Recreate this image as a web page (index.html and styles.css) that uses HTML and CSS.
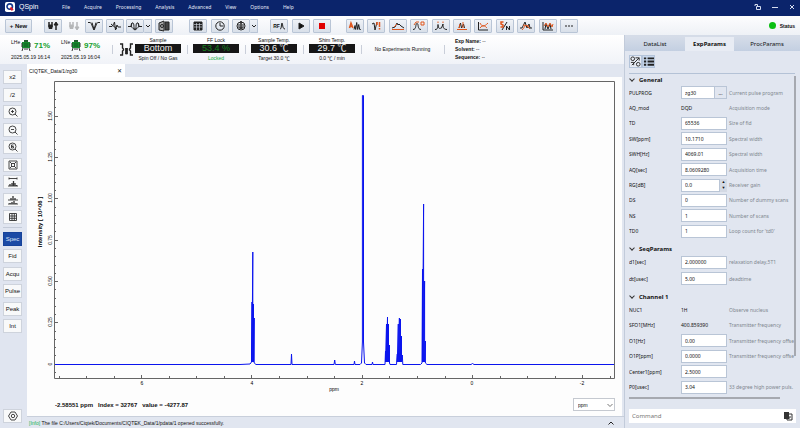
FILE: index.html
```
<!DOCTYPE html>
<html lang="en">
<head>
    <meta charset="UTF-8">
    <meta name="viewport" content="width=device-width, initial-scale=1.0">
    <title>QSpin</title>
    <link rel="stylesheet" href="styles.css">
</head>
<body>
    <header class="titlebar">
        <svg class="logo" viewBox="0 0 11 11"><rect width="11" height="11" rx="2" fill="#fff"/><circle cx="5.2" cy="5" r="3" fill="none" stroke="#17398f" stroke-width="1.8"/><path d="M6 6l2.500 3" stroke="#e0202c" stroke-width="2.6"/></svg>
        <span class="brand">QSpin</span>
        <nav class="menu">
            <a href="#">File</a><a href="#">Acquire</a><a href="#">Processing</a><a href="#">Analysis</a><a href="#">Advanced</a><a href="#">View</a><a href="#">Options</a><a href="#">Help</a>
        </nav>
        <div class="window-buttons">
            <button aria-label="Lock"><svg viewBox="0 0 8 8"><path d="M2.500 3.500h4v3h-4zM1 3V1.500h2.500V3.500"/></svg></button>
            <button aria-label="Minimize"><svg viewBox="0 0 8 8"><path d="M1 4.500h6"/></svg></button>
            <button aria-label="Close"><svg viewBox="0 0 8 8"><path d="M2 2l4 4M6 2l-4 4"/></svg></button>
        </div>
    </header>

    <div class="toolbar">
        <button class="tool new">+ New</button>
        <div class="tools tools-sample">
            <button class="tool" aria-label="Eject"><svg viewBox="0 0 14 12"><path class="thick" d="M3 2v5M6 2v5M10 10V3"/><path d="M3 5h3v3.500H3z" fill="#222"/><path d="M8 5l2-3 2 3z" fill="#222"/></svg></button>
            <button class="tool off" disabled aria-label="Insert"><svg viewBox="0 0 14 12"><path class="thick" d="M3 2v5M6 2v5M10 2v7"/><path d="M3 5h3v3.500H3z" fill="#222"/><path d="M8 7l2 3 2-3z" fill="#222"/></svg></button>
            <button class="tool" aria-label="Tune"><svg viewBox="0 0 14 12"><path d="M1 2.500h2c1.500 0 2 4 4 7.500 2-3.500 2.500-7.500 4-7.500h2M5 2.500l2 7 2-7"/></svg></button>
            <button class="tool" aria-label="Pulse"><svg viewBox="0 0 14 12"><path d="M1 6.500h3l1.500-2L6.500 2l1 8 1.500-5 1 2h3M3 4l6 5"/></svg></button>
            <div class="split">
                <button class="tool" aria-label="Shim"><svg viewBox="0 0 14 12"><path d="M0 6.500h3l1-3.500c2-1 2 2 2 6h2c0-4 0-7 2-6l1 3.500h3M4 3c-2 3 0 5 3 7 3-2 5-4 3-7"/></svg></button>
                <button class="tool arrow" aria-label="Shim menu"><svg viewBox="0 0 6 6"><path d="M1 2l2 2 2-2"/></svg></button>
            </div>
            <button class="tool" aria-label="Cabinet"><svg viewBox="0 0 14 12"><path d="M2 3l5-2v10l-5-1z" fill="#aaa"/><path d="M8 2h4v8H8z" fill="#444"/><circle cx="5" cy="6" r="1.500"/></svg></button>
        </div>
        <div class="tools tools-view">
            <button class="tool" aria-label="Table"><svg viewBox="0 0 14 12"><path d="M3 2h8v8H3z" fill="#222"/><path d="M3 4.500h8M3 7h8M5.500 3v7M8.500 3v7" stroke="#dde3ec" stroke-width=".6"/></svg></button>
            <button class="tool" aria-label="History"><svg viewBox="0 0 14 12"><circle cx="7" cy="6" r="4.200"/><path d="M7 3v3h3"/></svg></button>
            <div class="split">
                <button class="tool" aria-label="Gradient"><svg viewBox="0 0 14 12"><circle cx="7" cy="6" r="4"/><path class="thick" d="M7 1v8"/><path d="M5 4v4M9 4v4M5 8h4"/></svg></button>
                <button class="tool arrow" aria-label="Gradient menu"><svg viewBox="0 0 6 6"><path d="M1 2l2 2 2-2"/></svg></button>
            </div>
        </div>
        <div class="tools tools-run">
            <button class="tool rf">RF<svg viewBox="0 0 5 8"><path d="M0 7c2 0 1-6 2-6s0 6 3 6"/></svg></button>
            <button class="tool" aria-label="Run"><svg viewBox="0 0 14 12"><path d="M5 3l5 3-5 3z" fill="#111"/></svg></button>
            <button class="tool" aria-label="Stop"><svg viewBox="0 0 14 12"><path d="M4 3h6v6H4z" fill="#e00000" stroke="none"/></svg></button>
        </div>
        <div class="tools tools-process">
            <button class="tool" aria-label="Auto"><svg viewBox="0 0 14 12"><path d="M6 9.500l1-4 .7 4 1-7 1 7 1-5 1 5h1"/><path class="hot thick" d="M1.500 8l1.500-5 2 5M2 6.500h2"/></svg></button>
            <button class="tool" aria-label="Fourier"><svg viewBox="0 0 14 12"><path d="M3 4l2-1 1 7 2-8"/><path class="hot thick" d="M8 2v3M10.500 2v5M10.500 8v1.500"/></svg></button>
            <button class="tool" aria-label="Baseline"><svg viewBox="0 0 14 12"><path d="M1 8l3-1 2-4 1 2 1-1 2 2 3 2"/><path class="hot" d="M1 9.500h12M3 7l3-3"/></svg></button>
            <button class="tool" aria-label="Phase"><svg viewBox="0 0 14 12"><path d="M1 9.500c4 0 2-6 4-6s0 6 4 6"/><path class="hot" d="M2 5l2-3h3M9 2h3v3H9z"/></svg></button>
            <button class="tool" aria-label="Peaks"><svg viewBox="0 0 14 12"><path d="M1 9.500c3 0 2.500-2 3-5 .5 5 1.500 4 3.500 3.500L9 4c0 4 1 5.500 4 5.500"/><path class="hot" d="M4 1.500V3M9 1.500V3"/></svg></button>
            <button class="tool" aria-label="Integrate"><svg viewBox="0 0 14 12"><path d="M4 8l1.500-5 1 5 2-4 1 4"/><path class="hot" d="M2 9.500h10M4 8l1-4M8 2v6"/></svg></button>
            <button class="tool" aria-label="Fit"><svg viewBox="0 0 14 12"><path d="M2.500 2v8H12"/><path class="hot" d="M4 3c2 4 4 4 8 0M4 8c3-4 5-2 7 0"/></svg></button>
            <button class="tool" aria-label="Signal to noise"><svg viewBox="0 0 14 12"><path d="M4 10l5-8M8.500 10V6l3 4V6"/><path class="hot thick" d="M5.500 2H3v2l2 1v2H2.500"/></svg></button>
            <button class="tool" aria-label="Smooth"><svg viewBox="0 0 14 12"><path d="M1 8h2l3-6 2 6 2-4 1 4h2"/><path class="hot" d="M3 10l4-5 4 4M4 5l6 1"/></svg></button>
            <button class="tool" aria-label="Stack"><svg viewBox="0 0 14 12"><path d="M2 2v8h10M4 9l1-5 2 5 2-5 1 5"/><path class="hot" d="M3 6l2-3 2 4 2-4 2 4 1-3"/></svg></button>
            <button class="tool" aria-label="More"><svg viewBox="0 0 14 12"><path d="M3 6h2M6 6h2M9 6h2"/></svg></button>
        </div>
        <div class="status"><span class="dot"></span>Status</div>
    </div>

    <main class="main">
        <section class="left">
            <div class="monitor">
                <div class="level">
                    <div class="level-top"><span>LHe</span><svg viewBox="0 0 10 11"><path d="M3 0h4v2h2v6H1V2h2z" fill="#168a2e"/><path d="M3 1h4M1 3v4M9 3v4M2 8l-1 3M8 8l1 3M4 8v2M6 8v2" stroke="#333"/><path d="M3 4h4M3 6h4" stroke="#0d5c1d"/></svg><b>71%</b></div>
                    <div>2025.05.19 16:14</div>
                </div>
                <div class="level">
                    <div class="level-top"><span>LNe</span><svg viewBox="0 0 10 11"><path d="M3 0h4v2h2v6H1V2h2z" fill="#168a2e"/><path d="M3 1h4M1 3v4M9 3v4M2 8l-1 3M8 8l1 3M4 8v2M6 8v2" stroke="#333"/><path d="M3 4h4M3 6h4" stroke="#0d5c1d"/></svg><b>97%</b></div>
                    <div>2025.05.19 16:04</div>
                </div>
                <i class="sep"></i>
                <svg class="magnet" viewBox="0 0 13 13"><path d="M0 1h2.500v4l1 1v1l-1 1v4H0M13 1h-2.500v4l-1 1v1l1 1v4H13" fill="none" stroke="#222" stroke-width="1.400"/><path d="M5.500 5v6h2V5" fill="#222" stroke="#222" stroke-width=".8"/></svg>
                <div class="readout"><span>Sample</span><output class="lcd">Bottom</output><span>Spin Off / No Gas</span></div>
                <i class="sep"></i>
                <div class="readout"><span>FF Lock</span><output class="lcd lock">53.4 %</output><span class="green">Locked</span></div>
                <i class="sep"></i>
                <div class="readout"><span>Sample Temp.</span><output class="lcd">30.6 ℃</output><span>Target 30.0 ℃</span></div>
                <i class="sep"></i>
                <div class="readout"><span>Shim Temp.</span><output class="lcd">29.7 ℃</output><span>0.0 ℃ / min</span></div>
                <i class="sep"></i>
                <div class="running">No Experiments Running</div>
                <i class="sep"></i>
                <div class="experiment"><div><b>Exp Name:</b> --</div><div><b>Solvent:</b> --</div><div><b>Sequence:</b> --</div></div>
            </div>

            <div class="workspace">
                <aside class="sidebar">
                    <div class="side-group zooms">
                        <button class="side">x2</button>
                        <button class="side">/2</button>
                        <button class="side" aria-label="Zoom in"><svg viewBox="0 0 10 10"><circle cx="4.500" cy="4.500" r="3.500"/><path d="M7 7l2.500 2.500M3 4.500h3M4.500 3v3"/></svg></button>
                        <button class="side" aria-label="Zoom out"><svg viewBox="0 0 10 10"><circle cx="4.500" cy="4.500" r="3.500"/><path d="M7 7l2.500 2.500M3 4.500h3"/></svg></button>
                        <button class="side" aria-label="Reset zoom"><svg viewBox="0 0 10 10"><circle cx="4.500" cy="4.500" r="3.500"/><path d="M7 7l2.500 2.500M5.500 3h-2v3h2V4.500h-2"/></svg></button>
                        <button class="side" aria-label="Fit"><svg viewBox="0 0 10 10"><path d="M1 1h8v8H1zM2 2l2 2M8 2L6 4M2 8l2-2M8 8L6 6M3.500 3.500h3v3h-3z"/></svg></button>
                        <button class="side" aria-label="Full width"><svg viewBox="0 0 10 10"><path d="M1 1.500h8M1 .5v2M9 .5v2M0 9h10"/><path class="thick" d="M2 9V7M4 9V6M5.500 9V4M7 9V6M8.500 9V8"/></svg></button>
                        <button class="side" aria-label="Full height"><svg viewBox="0 0 10 10"><path d="M0 5h10M0 9h10"/><path class="thick" d="M3 5V3M5 5V1M7 5V3M2 9V8M4 9V7M6 9V6M8 9V8"/></svg></button>
                        <button class="side" aria-label="Grid"><svg viewBox="0 0 10 10"><path d="M1.500 1.500h7v7h-7zM1.500 4h7M1.500 6.300h7M4 1.500v7M6.300 1.500v7"/></svg></button>
                    </div>
                    <div class="side-group modes">
                        <button class="side active">Spec</button>
                        <button class="side">Fid</button>
                        <button class="side">Acqu</button>
                        <button class="side">Pulse</button>
                        <button class="side">Peak</button>
                        <button class="side">Int</button>
                    </div>
                    <button class="side settings" aria-label="Settings"><svg viewBox="0 0 10 10"><path d="M3 1h4l2.500 4L7 9H3L.5 5z"/><circle cx="5" cy="5" r="1.700"/></svg></button>
                </aside>

                <div class="document">
                    <div class="doc-tabs"><div class="doc-tab"><span>CIQTEK_Data/1/zg30</span><button aria-label="Close tab">✕</button></div></div>
                    <div class="sheet">
                        <svg class="plot" viewBox="27 77 595 318">
                            <path class="axis" d="M54.500 81.500H614.500V378.500H54.500z"/>
                            <!-- ticks -->
                            <path class="axis" d="M54 116.500h4M54 157.500h4M54 198.500h4M54 240.500h4M54 281.500h4M54 322.500h4M54 364.500h4M54 91.500h2M54 99.500h2M54 107.500h2M54 124.500h2M54 132.500h2M54 141.500h2M54 149.500h2M54 165.500h2M54 174.500h2M54 182.500h2M54 190.500h2M54 207.500h2M54 215.500h2M54 223.500h2M54 231.500h2M54 248.500h2M54 256.500h2M54 265.500h2M54 273.500h2M54 289.500h2M54 298.500h2M54 306.500h2M54 314.500h2M54 331.500h2M54 339.500h2M54 347.500h2M54 355.500h2M54 372.500h2"/>
                            <path class="axis" d="M141.500 378v-3M251.500 378v-3M362.500 378v-3M472.500 378v-3M582.500 378v-3M59.500 378v-2M86.500 378v-2M114.500 378v-2M169.500 378v-2M196.500 378v-2M224.500 378v-2M279.500 378v-2M307.500 378v-2M334.500 378v-2M389.500 378v-2M417.500 378v-2M445.500 378v-2M500.500 378v-2M527.500 378v-2M555.500 378v-2M610.500 378v-2"/>
                            <g class="ticks">
                                <text transform="translate(52 116) rotate(-90)">1.50</text>
                                <text transform="translate(52 157) rotate(-90)">1.25</text>
                                <text transform="translate(52 198) rotate(-90)">1.00</text>
                                <text transform="translate(52 240) rotate(-90)">0.75</text>
                                <text transform="translate(52 281) rotate(-90)">0.50</text>
                                <text transform="translate(52 322) rotate(-90)">0.25</text>
                                <text transform="translate(52 364) rotate(-90)">0</text>
                                <text x="142" y="385">6</text>
                                <text x="252" y="385">4</text>
                                <text x="362" y="385">2</text>
                                <text x="472" y="385">0</text>
                                <text x="582" y="385">-2</text>
                                <text x="334" y="391">ppm</text>
                            </g>
                            <text class="y-title" transform="translate(42 222) rotate(-90)">Intensity [ 10^06 ]</text>
                            <!-- spectrum -->
                            <path class="trace" d="M55 364.500H240L250 364L251.500 362V351L252 302V362L252.800 252V362L253.500 304V362L254.200 318V363L256 364.500H291L291.500 354L292 364.500H334L334.700 360L335.300 364.500H354L354.500 361L355 364.500H360L361.500 363L362.400 342V95.500H363.500V342L364.500 363L366 364.500H372L372.500 362L373 364.500H385L385.500 351V362L386.500 324V362L387.500 317V362L388.500 324V362L389.500 345V363L390 364.500H396.500L397.300 354V362L398.300 324V362L399.400 318V362L400.500 319V362L401.500 336V362L402.300 355L402.800 364.500H420.500L422 363L422.500 269V362L423.600 204V362L424.600 281V362L425.400 341V363L427 364.500H471L472.500 363.500L474 364.500H614"/>
                        </svg>
                        <div class="sheet-foot">
                            <b class="cursor">-2.58551 ppm &nbsp; Index = 32767 &nbsp; value = -4277.87</b>
                            <div class="unit">
                                <select aria-label="Unit"><option>ppm</option><option>Hz</option></select>
                                <svg viewBox="0 0 8 8"><path d="M1.500 3L4 5.500 6.500 3"/></svg>
                            </div>
                        </div>
                    </div>
                    <div class="log"><span><em>[Info]</em> The file C:/Users/Ciqtek/Documents/CIQTEK_Data/1/pdata/1 opened successfully.</span><button aria-label="Expand log"><svg viewBox="0 0 8 8"><path d="M1.500 5.500L4 3l2.500 2.500"/></svg></button></div>
                </div>
            </div>
        </section>

        <aside class="panel">
            <div class="tabs">
                <button>DataList</button>
                <button class="current">ExpParams</button>
                <button>ProcParams</button>
            </div>
            <div class="panel-tools">
                <button aria-label="Pulse view"><svg viewBox="0 0 12 12"><circle cx="3" cy="3" r="2"/><circle cx="9" cy="9" r="2"/><path d="M2 10l8-8M6 2h4v3M1 7h3v3"/></svg></button>
                <button class="on" aria-label="List view"><svg viewBox="0 0 12 12"><path class="bold" d="M5 2.500h7M5 6h7M5 9.500h7M1 2.500h2.500M1 6h2.500M1 9.500h2.500"/></svg></button>
            </div>
            <form class="params">
                <h2>General</h2>
                <div class="rows rows-general">
                    <label for="pulprog">PULPROG</label><div class="pick"><input id="pulprog" value="zg30"><button type="button">...</button></div><span>Current pulse program</span>
                    <label for="aqmod">AQ_mod</label><output id="aqmod">DQD</output><span>Acquisition mode</span>
                    <label for="td">TD</label><input id="td" value="65536"><span>Size of fid</span>
                    <label for="sw">SW[ppm]</label><input id="sw" value="10.1710"><span>Spectral width</span>
                    <label for="swh">SWH[Hz]</label><input id="swh" value="4069.01"><span>Spectral width</span>
                    <label for="aq">AQ[sec]</label><input id="aq" value="8.0609280"><span>Acquisition time</span>
                    <label for="rg">RG[dB]</label><div class="spin"><input id="rg" value="0.0"><button type="button" aria-label="Up">▲</button><button type="button" aria-label="Down">▼</button></div><span>Receiver gain</span>
                    <label for="ds">DS</label><input id="ds" value="0"><span>Number of dummy scans</span>
                    <label for="ns">NS</label><input id="ns" value="1"><span>Number of scans</span>
                    <label for="td0">TD0</label><input id="td0" value="1"><span>Loop count for 'td0'</span>
                </div>
                <h2>SeqParams</h2>
                <div class="rows rows-seq">
                    <label for="d1">d1[sec]</label><input id="d1" value="2.000000"><span>relaxation delay,5T1</span>
                    <label for="dt">dt[usec]</label><input id="dt" value="5.00"><span>deadtime</span>
                </div>
                <h2>Channel 1</h2>
                <div class="rows rows-channel">
                    <label for="nuc1">NUC1</label><output id="nuc1">1H</output><span>Observe nucleus</span>
                    <label for="sfo1">SFO1[MHz]</label><output id="sfo1">400.859390</output><span>Transmitter frequency</span>
                    <label for="o1">O1[Hz]</label><input id="o1" value="0.00"><span>Transmitter frequency offse</span>
                    <label for="o1p">O1P[ppm]</label><input id="o1p" value="0.0000"><span>Transmitter frequency offse</span>
                    <label for="center1">Center1[ppm]</label><input id="center1" value="2.5000"><span></span>
                    <label for="p0">P0[usec]</label><input id="p0" value="3.04"><span>33 degree high power puls.</span>
                </div>
                <i class="scroll-y"></i>
            </form>
            <i class="scroll-x"></i>
            <div class="command">
                <input placeholder="Command" aria-label="Command">
                <svg viewBox="0 0 10 10"><path d="M4 3h5v6H4z" fill="#fff" stroke="#333"/><path d="M1 1h5v7H1z" fill="#333"/><path d="M7 5v2H5" fill="none" stroke="#333"/></svg>
            </div>
        </aside>
    </main>
</body>
</html>
```
FILE: styles.css
```
* {
    box-sizing: border-box;
}
body {
    margin: 0;
    height: 100vh;
    display: flex;
    flex-direction: column;
    overflow: hidden;
    background-color: #e1e6f0;
    color: #111;
    font-family: "Liberation Sans", "Noto Sans CJK SC", Arial, sans-serif;
    font-size: 5px;
    line-height: 8px;
}
button, input, select {
    margin: 0;
    padding: 0;
    border: none;
    background: none;
    color: inherit;
    font: inherit;
}
svg {
    display: block;
    flex: none;
}

/* title bar */
.titlebar {
    flex: none;
    display: flex;
    align-items: center;
    height: 16px;
    padding: 0 4px 2px 5px;
    background-color: #0b246b;
    color: #e4e9f6;
}
.logo {
    width: 10px;
    height: 10px;
    margin-right: 4px;
}
.brand {
    width: 43px;
    font-size: 7px;
    color: white;
}
.menu {
    display: flex;
    gap: 14px;
    font-family: "Noto Sans", sans-serif;
}
.menu a {
    color: inherit;
    text-decoration: none;
}
.window-buttons {
    display: flex;
    gap: 9px;
    margin-left: auto;
}
.window-buttons svg {
    width: 8px;
    height: 8px;
    fill: none;
    stroke: #d5dcef;
}

/* toolbar */
.toolbar {
    flex: none;
    display: flex;
    align-items: center;
    height: 19px;
    padding: 0 5px;
    background: linear-gradient(#fdfdfe, #eef1f6);
}
.tool {
    flex: none;
    display: flex;
    justify-content: center;
    align-items: center;
    width: 18px;
    height: 14px;
    border: 1px solid #b9c5d6;
    border-radius: 1px;
    background: linear-gradient(#eff2f7, #d8dfe9);
}
.tool svg {
    width: 14px;
    height: 12px;
    fill: none;
    stroke: #222;
}
.tool .thick {
    stroke-width: 1.5;
}
.tool .hot {
    stroke: #e0561c;
}
.new {
    width: 27px;
    font-size: 6px;
    font-weight: bold;
}
.off {
    border-color: transparent;
    background: none;
    opacity: .3;
}
.arrow {
    width: 8px;
    border-left: none;
}
.tool.arrow svg {
    width: 6px;
    height: 6px;
}
.tool.rf {
    font-weight: bold;
}
.tool.rf svg {
    width: 5px;
    height: 8px;
}
.split {
    display: flex;
}
.tools {
    display: flex;
    justify-content: space-between;
}
.tools-sample {
    width: 129px;
    margin-left: 12px;
}
.tools-view {
    width: 69px;
    margin-left: 16px;
}
.tools-run {
    width: 61px;
    margin-left: 12px;
}
.tools-process {
    width: 232px;
    margin-left: 15px;
}
.status {
    display: flex;
    align-items: center;
    gap: 4px;
    margin-left: auto;
    font-weight: bold;
}
.dot {
    width: 7px;
    height: 7px;
    border-radius: 50%;
    background-color: #0bbf12;
}

.main {
    flex: 1;
    min-height: 0;
    display: flex;
}
.left {
    flex: 1;
    min-width: 0;
    display: flex;
    flex-direction: column;
}

/* hardware status */
.monitor {
    flex: none;
    display: flex;
    align-items: center;
    height: 29px;
    padding: 0 0 1px 11px;
    background: linear-gradient(#fff, #f1f3f8);
    white-space: nowrap;
}
.level {
    width: 50px;
}
.level-top {
    display: flex;
    height: 15px;
}
.level-top span {
    width: 10px;
}
.level-top svg {
    width: 10px;
    height: 11px;
    margin: 2px 3px 0 0;
}
.level-top b {
    font-size: 8px;
    line-height: 16px;
    color: #13a02c;
}
.sep {
    flex: none;
    width: 1px;
    height: 9px;
    margin: 0 5px 0 6px;
    background-color: #c9ced9;
}
.level + .sep {
    margin: 0 7px 0 1px;
}
.magnet {
    width: 13px;
    height: 13px;
    margin-right: 2px;
}
.readout {
    flex: none;
    width: 46px;
    display: flex;
    flex-direction: column;
    align-items: center;
}
.lcd {
    width: 46px;
    height: 9px;
    margin-bottom: 1px;
    background-color: #161616;
    color: #f2f2f2;
    font-size: 9px;
    line-height: 9px;
    text-align: center;
}
.lcd.lock {
    color: #17821f;
}
.green {
    color: #17b045;
}
.running {
    width: 71px;
    text-align: center;
}
.experiment {
    margin-left: 5px;
}

/* left buttons */
.workspace {
    flex: 1;
    min-height: 0;
    display: flex;
}
.sidebar {
    flex: none;
    width: 27px;
    display: flex;
    flex-direction: column;
    padding: 6px 5px 5px 3px;
    background-color: #e0e5f0;
}
.side-group {
    display: flex;
    flex-direction: column;
    justify-content: space-between;
}
.zooms {
    height: 154px;
}
.modes {
    height: 106px;
    margin-top: 3px;
    padding-top: 4px;
    border-top: 1px solid #c3cad8;
}
.side {
    display: flex;
    justify-content: center;
    align-items: center;
    height: 14px;
    border: 1px solid #ced3dc;
    background-color: #f8f9fa;
    font-size: 6px;
}
.side.active {
    border-color: #16429a;
    background-color: #1b4aa5;
    color: #dfe7f8;
}
.side svg {
    width: 10px;
    height: 10px;
    fill: none;
    stroke: #333;
    stroke-width: .9;
}
.side .thick {
    stroke-width: 1.3;
}
.settings {
    margin-top: auto;
}

/* spectrum */
.document {
    flex: 1;
    min-width: 0;
    display: flex;
    flex-direction: column;
}
.doc-tabs {
    flex: none;
}
.doc-tab {
    display: flex;
    justify-content: space-between;
    align-items: center;
    width: 98px;
    height: 13px;
    padding: 0 3px 0 2px;
    background-color: white;
}
.doc-tab button {
    font-family: "DejaVu Sans", sans-serif;
    font-size: 6px;
    font-weight: bold;
}
.sheet {
    flex: 1;
    min-height: 0;
    display: flex;
    flex-direction: column;
    margin-right: 2px;
    background-color: #fdfdfd;
}
.plot {
    flex: 1;
    width: 100%;
    min-height: 0;
    font-size: 5px;
}
.axis {
    fill: none;
    stroke: #666;
}
.trace {
    fill: none;
    stroke: #0a14ee;
}
.ticks {
    text-anchor: middle;
}
.y-title {
    font-size: 6px;
    font-weight: bold;
    text-anchor: middle;
}
.sheet-foot {
    flex: none;
    display: flex;
    justify-content: space-between;
    align-items: center;
    height: 21px;
    padding: 0 7px 2px 28px;
}
.cursor {
    font-size: 6px;
}
.unit {
    display: grid;
    align-items: center;
    width: 42px;
}
.unit select, .unit svg {
    grid-area: 1 / 1;
}
.unit select {
    appearance: none;
    height: 13px;
    padding-left: 4px;
    border: 1px solid #c5c9d0;
    background-color: white;
}
.unit svg {
    justify-self: end;
    width: 8px;
    height: 8px;
    margin-right: 1px;
    fill: none;
    stroke: #777;
    pointer-events: none;
}
.log {
    flex: none;
    display: flex;
    justify-content: space-between;
    align-items: center;
    height: 12px;
    padding: 0 9px 0 2px;
    border-top: 1px solid #c8cfdb;
}
.log em {
    color: #19b050;
    font-style: normal;
}
.log svg {
    width: 8px;
    height: 8px;
    fill: none;
    stroke: #222;
}

/* parameters */
.panel {
    flex: none;
    width: 22%;
    display: flex;
    flex-direction: column;
    border-left: 1px solid #c2cbda;
    font-family: "Noto Sans", sans-serif;
}
.tabs {
    flex: none;
    display: flex;
    height: 16px;
    padding-top: 2px;
    background-color: #d5dce8;
}
.tabs button {
    flex: 60 1 0;
    background: linear-gradient(#d5dce8, #c3cfe1);
    font-size: 6px;
}
.tabs .current {
    flex-grow: 49;
    background: #e8ecf4;
    font-weight: bold;
}
.tabs button:last-child {
    flex-grow: 66;
}
.panel-tools {
    flex: none;
    display: flex;
    height: 23px;
    margin: 0 5px 0 4px;
    padding-top: 4px;
    border-bottom: 1px solid #b4c2d6;
}
.panel-tools button {
    display: flex;
    justify-content: center;
    align-items: center;
    width: 13px;
    height: 13px;
    border: 1px solid #b4c4da;
    background-color: #e6ebf4;
}
.panel-tools .on {
    background-color: #c8d8ee;
}
.panel-tools svg {
    width: 11px;
    height: 11px;
    fill: none;
    stroke: #222;
}
.panel-tools .bold {
    stroke-width: 2;
}
.params {
    position: relative;
    flex: 1;
    min-height: 0;
    margin: 0 4px;
    overflow: hidden;
}
.params h2 {
    display: flex;
    align-items: center;
    height: 11px;
    margin: 0;
    font-size: 6px;
}
.params h2::before {
    content: "";
    width: 3px;
    height: 3px;
    margin: 0 5px 1px 1px;
    border: solid #333;
    border-width: 0 1px 1px 0;
    transform: rotate(45deg);
}
.rows {
    display: grid;
    grid-template-columns: 52px 46px 1fr;
    grid-auto-rows: 1fr;
    align-items: center;
    white-space: nowrap;
    margin-bottom: 4px;
}
.rows-general {
    height: 154px;
}
.rows-seq {
    height: 33px;
}
.rows-channel {
    height: 93px;
    margin: 0;
}
.rows > span {
    padding-left: 2px;
    color: #80868f;
}
.rows input {
    width: 46px;
    height: 13px;
    padding-left: 3px;
    border: 1px solid #b9c5d6;
    background-color: white;
}
.pick {
    display: flex;
}
.rows .pick input {
    width: 34px;
}
.pick button {
    width: 12px;
    border: 1px solid #b9c5d6;
    border-left: none;
}
.spin {
    display: grid;
    grid-template-columns: 39px 7px;
    grid-template-rows: 6px 7px;
}
.rows .spin input {
    grid-row: 1 / 3;
    width: 39px;
}
.spin button {
    background-color: #d3d9e4;
    font-size: 4px;
    line-height: 6px;
}
.scroll-y {
    position: absolute;
    top: 2px;
    right: 0;
    width: 2px;
    height: 280px;
    background-color: #a6a9b0;
}
.scroll-x {
    flex: none;
    width: 151px;
    height: 2px;
    margin: 1px 0 0 4px;
    background-color: #a6a9b0;
}
.command {
    flex: none;
    display: flex;
    align-items: center;
    height: 14px;
    margin: 10px 4px 5px;
    padding: 0 3px;
    background-color: white;
}
.command input {
    flex: 1;
    min-width: 0;
    font-size: 6px;
}
.command svg {
    width: 10px;
    height: 10px;
}
```
